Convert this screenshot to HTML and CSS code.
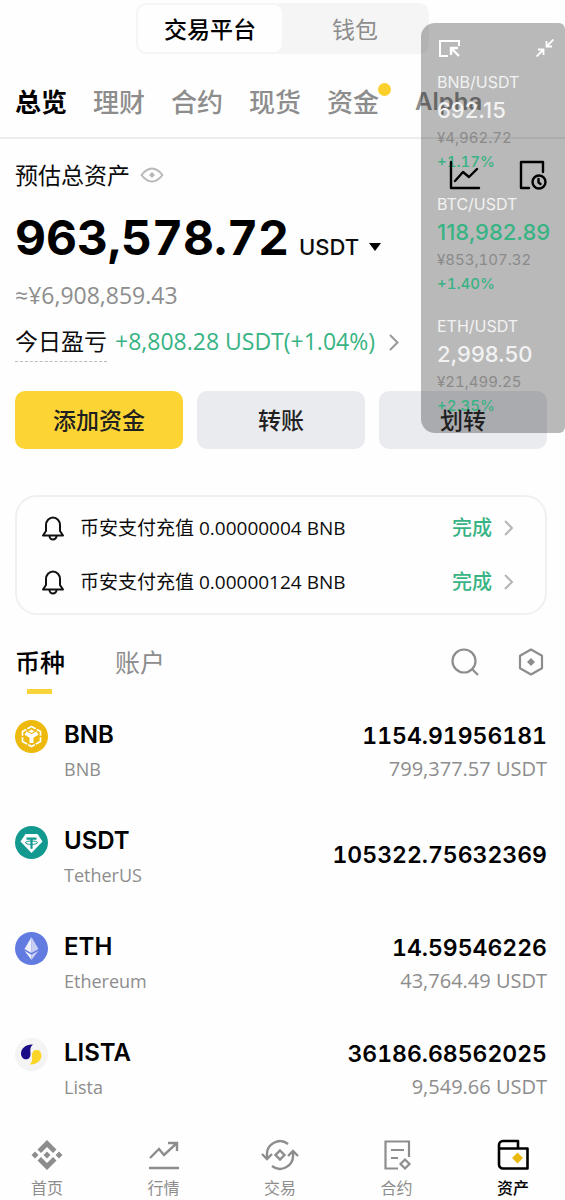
FILE: index.html
```html
<!DOCTYPE html>
<html lang="zh-CN">
<head>
<meta charset="utf-8">
<meta name="viewport" content="width=device-width, initial-scale=1">
<title>资产</title>
<link rel="stylesheet" href="styles.css">
</head>
<body>
<header>
  <div class="switch">
    <button class="switch-item active">交易平台</button>
    <button class="switch-item">钱包</button>
  </div>
  <nav class="tabs">
    <a href="#" class="tab active">总览</a>
    <a href="#" class="tab">理财</a>
    <a href="#" class="tab">合约</a>
    <a href="#" class="tab">现货</a>
    <a href="#" class="tab dotted">资金</a>
    <a href="#" class="tab">Alpha</a>
  </nav>
</header>

<main>
  <section class="summary">
    <div class="summary-head">
      <span>预估总资产</span>
      <svg class="eye" width="24" height="16" viewBox="0 0 24 16" fill="none" stroke="#b8b8b8" stroke-width="2"><path d="M1.500 8C5 3.500 8 1.500 12 1.500S19 3.500 22.500 8C19 12.500 16 14.500 12 14.500S5 12.500 1.500 8Z"/><path d="M12 5l3 3-3 3-3-3z" fill="#b8b8b8" stroke="none"/></svg>
      <div class="quick">
        <button class="icon-btn" aria-label="走势"><svg width="32" height="30" viewBox="0 0 32 30" fill="none" stroke="#000" stroke-width="2.400" stroke-linecap="round" stroke-linejoin="round"><path d="M2 2v26h28"/><path d="M6 21l8-9 6 5 8-8"/></svg></button>
        <button class="icon-btn" aria-label="历史记录"><svg width="28" height="30" viewBox="0 0 28 30" fill="none" stroke="#000" stroke-width="2.400" stroke-linecap="round" stroke-linejoin="round"><path d="M24 12V2H2v26h8"/><circle cx="20" cy="22" r="6.500"/><path d="M19.500 19v3.500l2 1.500"/></svg></button>
      </div>
    </div>
    <div class="balance">
      <strong class="amount">963,578.72</strong>
      <button class="unit">USDT <svg width="12" height="8" viewBox="0 0 12 8"><path d="M0 0h12L6 8z"/></svg></button>
    </div>
    <div class="fiat">≈¥6,908,859.43</div>
    <a href="#" class="pnl">
      <span class="pnl-label">今日盈亏</span>
      <span class="pnl-value">+8,808.28 USDT(+1.04%)</span>
      <svg width="10" height="17" viewBox="0 0 10 17" fill="none" stroke="#999" stroke-width="2"><path d="M1 1l7.500 7.500L1 16"/></svg>
    </a>
    <div class="actions">
      <button class="action primary">添加资金</button>
      <button class="action">转账</button>
      <button class="action"><span class="raised">划转</span></button>
    </div>
  </section>

  <section class="notices">
    <a href="#" class="notice">
      <svg width="24" height="26" viewBox="0 0 24 26" fill="none" stroke="#111" stroke-width="2" stroke-linejoin="round"><path d="M5 10a7 7.500 0 0 1 14 0v6l3 4.500H2L5 16z"/><path d="M8.500 21a3.500 3.500 0 0 0 7 0"/></svg>
      <span class="notice-text">币安支付充值 0.00000004 BNB</span>
      <span class="done">完成</span>
      <svg width="10" height="16" viewBox="0 0 10 16" fill="none" stroke="#b5b5b5" stroke-width="2"><path d="M1 1l7 7-7 7"/></svg>
    </a>
    <a href="#" class="notice">
      <svg width="24" height="26" viewBox="0 0 24 26" fill="none" stroke="#111" stroke-width="2" stroke-linejoin="round"><path d="M5 10a7 7.500 0 0 1 14 0v6l3 4.500H2L5 16z"/><path d="M8.500 21a3.500 3.500 0 0 0 7 0"/></svg>
      <span class="notice-text">币安支付充值 0.00000124 BNB</span>
      <span class="done">完成</span>
      <svg width="10" height="16" viewBox="0 0 10 16" fill="none" stroke="#b5b5b5" stroke-width="2"><path d="M1 1l7 7-7 7"/></svg>
    </a>
  </section>

  <div class="list-head">
    <button class="list-tab active">币种</button>
    <button class="list-tab">账户</button>
    <div class="list-tools">
      <button class="icon-btn" aria-label="搜索"><svg width="28" height="28" viewBox="0 0 28 28" fill="none" stroke="#8d8d8d" stroke-width="2.200"><circle cx="13" cy="13" r="11.500"/><path d="M21 21l6 6"/></svg></button>
      <button class="icon-btn" aria-label="设置"><svg width="26" height="28" viewBox="0 0 26 28" fill="none" stroke="#8d8d8d" stroke-width="2.200" stroke-linejoin="round"><path d="M13 1.500l11 6.200v12.600l-11 6.200-11-6.200V7.700z"/><path d="M13 10l4 4-4 4-4-4z" fill="#8d8d8d" stroke="none"/></svg></button>
    </div>
  </div>

  <ul class="coins">
    <li class="coin">
      <svg class="coin-icon" width="33" height="33" viewBox="0 0 33 33"><circle cx="16.500" cy="16.500" r="16.500" fill="#edb90c"/><path d="M16.500 6.500l9 5v10l-9 5-9-5v-10z" fill="none" stroke="#fff" stroke-width="1.700"/><path d="M16.500 16.500l-6-3.500M16.500 16.500l6-3.500M16.500 16v7" stroke="#fff" stroke-width="4" fill="none"/><path d="M16.500 9.500l3 1.700-3 1.700-3-1.700z" fill="#fff"/><path d="M11 8l2 3M22 8l-2 3M6 16.500h3.500M24 16.500h3M12 25.500l1.500-2.500M21 25.500l-1.500-2.500" stroke="#edb90c" stroke-width="1.300"/></svg>
      <div class="coin-name"><b>BNB</b><small>BNB</small></div>
      <div class="coin-value"><b>1154.91956181</b><small>799,377.57 USDT</small></div>
    </li>
    <li class="coin">
      <svg class="coin-icon" width="33" height="33" viewBox="0 0 33 33"><circle cx="16.500" cy="16.500" r="16.500" fill="#129990"/><path d="M10.500 8h12l5 7.500-11 11.500-11-11.500z" fill="#fff"/><path d="M11.500 11.500h10v2.200h-3.900v9h-2.200v-9h-3.900z" fill="#129990"/><ellipse cx="16.500" cy="16.700" rx="6" ry="1.700" fill="none" stroke="#129990" stroke-width="1"/></svg>
      <div class="coin-name"><b>USDT</b><small>TetherUS</small></div>
      <div class="coin-value"><b>105322.75632369</b></div>
    </li>
    <li class="coin">
      <svg class="coin-icon" width="33" height="33" viewBox="0 0 33 33"><circle cx="16.500" cy="16.500" r="16.500" fill="#627be0"/><path d="M16.500 5L9.500 17l7 4z" fill="#eef0fb"/><path d="M16.500 5l7 12-7 4z" fill="#c8cff3"/><path d="M9.500 18.700l7 4V28z" fill="#eef0fb"/><path d="M23.500 18.700l-7 4V28z" fill="#c8cff3"/></svg>
      <div class="coin-name"><b>ETH</b><small>Ethereum</small></div>
      <div class="coin-value"><b>14.59546226</b><small>43,764.49 USDT</small></div>
    </li>
    <li class="coin">
      <svg class="coin-icon" width="33" height="33" viewBox="0 0 33 33"><circle cx="16.500" cy="16.500" r="16.500" fill="#f4f4f4"/><path d="M18 6.500C11 6 6 10.500 6 15.500c0 3.500 2.500 5.800 5 5.800 3 0 4.500-2.200 4.500-5.300C15.500 12 14.500 9.500 18 6.500z" fill="#1a0c86"/><path d="M14.500 26.500C21.500 27 26.500 22.500 26.500 17.500c0-3.500-2.300-5.500-5-5.500-3 0-4.500 2-4.500 5 0 4 1 6.500-2.500 9.500z" fill="#fbd527"/></svg>
      <div class="coin-name"><b>LISTA</b><small>Lista</small></div>
      <div class="coin-value"><b>36186.68562025</b><small>9,549.66 USDT</small></div>
    </li>
  </ul>
</main>

<nav class="bottom-nav">
  <a href="#" class="nav-item"><svg width="32" height="32" viewBox="0 0 32 32" fill="#8d8d8d"><path d="M16 1l9.500 9.500-3.500 3.500-6-6-6 6-3.500-3.500z"/><path d="M16 31l9.500-9.500L22 18l-6 6-6-6-3.500 3.500z"/><path d="M16 12.500l3.500 3.500-3.500 3.500-3.500-3.500zM4 12.500L7.500 16 4 19.500.5 16zM28 12.500l3.500 3.500-3.500 3.500-3.500-3.500z"/></svg>首页</a>
  <a href="#" class="nav-item"><svg width="32" height="32" viewBox="0 0 32 32" fill="none" stroke="#8d8d8d" stroke-width="2.400"><path d="M2 19l9-9 5 6L29 4M20 4h9v8M1 29h30"/></svg>行情</a>
  <a href="#" class="nav-item"><svg width="38" height="32" viewBox="0 0 38 32" fill="none" stroke="#8d8d8d" stroke-width="2.400"><path d="M27 5A13 13 0 0 0 6 16v3M1 15l5 5 5-5M11 27a13 13 0 0 0 21-11v-3M27 17l5-5 5 5"/><path d="M19 11.500l4.500 4.500-4.500 4.500-4.500-4.500z"/></svg>交易</a>
  <a href="#" class="nav-item"><svg width="32" height="32" viewBox="0 0 32 32" fill="none" stroke="#8d8d8d" stroke-width="2.200"><path d="M17 29.500H4.500v-27H28V18M10 11h13M10 19h7"/><path d="M24 20.500l4.500 4.500-4.500 4.500-4.500-4.500z"/></svg>合约</a>
  <a href="#" class="nav-item active"><svg width="32" height="32" viewBox="0 0 32 32" fill="none" stroke="#000" stroke-width="2.600" stroke-linejoin="round"><path d="M2 9.500h28.500v20H6a4 4 0 0 1-4-4V6a4 4 0 0 1 4-4h15v7.500"/><path d="M20.500 13.500l5.500 5.500-5.500 5.500L15 19z" fill="#e9b90f" stroke="none"/></svg>资产</a>
</nav>

<aside class="ticker">
  <div class="ticker-head">
    <svg width="21" height="17" viewBox="0 0 21 17" fill="none" stroke="#fff" stroke-width="2"><path d="M20 6V1H1v15h8"/><path d="M12 15V8h7M12 8l8 8" stroke-width="2.400"/></svg>
    <svg width="18" height="18" viewBox="0 0 18 18" fill="none" stroke="#fff" stroke-width="1.800"><path d="M17.500.5l-7 7M10.500 2v5.500H16M.5 17.500l7-7M2 10.500h5.500V16"/></svg>
  </div>
  <div class="pair"><span class="pair-name">BNB/USDT</span><span class="pair-price">692.15</span><span class="pair-fiat">¥4,962.72</span><span class="pair-change">+1.17%</span></div>
  <div class="pair"><span class="pair-name">BTC/USDT</span><span class="pair-price up">118,982.89</span><span class="pair-fiat">¥853,107.32</span><span class="pair-change">+1.40%</span></div>
  <div class="pair"><span class="pair-name">ETH/USDT</span><span class="pair-price">2,998.50</span><span class="pair-fiat">¥21,499.25</span><span class="pair-change">+2.35%</span></div>
</aside>
</body>
</html>
```
FILE: styles.css
```css
:root {
  --text: "Open Sans", "Noto Sans CJK SC", sans-serif;
  --figure: Inter, "Noto Sans CJK SC", sans-serif;
  --gray: #8d8d8d;
  --green: #38b384;
}

* { box-sizing: border-box; }

body {
  margin: 0;
  min-height: 100vh;
  position: relative;
  display: flex;
  flex-direction: column;
  background: #fefefe;
  color: #0c0c0c;
  font: 400 23px/30px var(--text);
}

a { color: inherit; text-decoration: none; }
button { border: 0; padding: 0; background: none; color: inherit; font: inherit; cursor: pointer; }
svg { display: block; flex: none; }
.icon-btn { display: block; }

.switch {
  width: 52%;
  margin: 3px auto 0;
  display: grid;
  grid-template-columns: 1fr 1fr;
  border: 2px solid #f5f5f5;
  border-radius: 10px;
  background: #f5f5f5;
}
.switch-item { height: 47px; border-radius: 8px; color: var(--gray); }
.switch-item.active { background: #fefefe; color: #000; font-weight: 500; }

.tabs {
  display: flex;
  gap: 26px;
  padding: 31px 15px 18px;
  border-bottom: 2px solid #ededed;
  font-size: 26px;
  line-height: 34px;
  font-weight: 500;
  color: var(--gray);
}
.tab { position: relative; white-space: nowrap; }
.tab.active { color: #000; font-weight: 700; }
.tab:last-child { margin-left: 10px; font: 600 24px/34px var(--figure); }
.tab.dotted::after {
  content: "";
  position: absolute;
  top: -2px;
  right: -12px;
  width: 13px;
  height: 13px;
  border-radius: 50%;
  background: #fbd02d;
}

.summary { padding: 19px 18px 0 15px; }
.summary-head { display: flex; align-items: center; height: 34px; gap: 10px; }
.quick { display: flex; gap: 38px; margin-left: auto; position: relative; z-index: 2; }

.balance { display: flex; align-items: baseline; gap: 10px; margin-top: 16px; line-height: 60px; }
.amount { font-family: var(--figure); font-size: 48px; font-weight: 700; font-variant-numeric: tabular-nums; color: #000; }
.unit { display: flex; align-items: center; gap: 10px; font-family: var(--figure); font-size: 22px; font-weight: 500; }
.fiat { margin-top: 3px; color: var(--gray); }
.pnl { display: flex; align-items: flex-start; margin-top: 16px; }
.pnl-label { padding-bottom: 5px; border-bottom: 1px dashed #bbb; }
.pnl-value { margin: 0 14px 0 8px; color: var(--green); white-space: nowrap; }
.pnl svg { margin-top: 8px; }

.actions { display: grid; grid-template-columns: repeat(3, 1fr); gap: 14px; margin-top: 29px; }
.action { height: 58px; border-radius: 10px; background: #eaebef; font-weight: 500; color: #202020; }
.action.primary { background: #fcd535; }
.raised { position: relative; z-index: 2; }

.notices { margin: 46px 18px 0 15px; padding: 4px 31px 4px 24px; border: 2px solid #f0f0f0; border-radius: 22px; }
.notice { display: flex; align-items: center; height: 54px; font-size: 19px; }
.notice-text { flex: 1; margin-left: 15px; }
.done { margin-right: 12px; font-size: 20px; font-weight: 500; color: var(--green); }

.list-head { display: flex; align-items: center; margin: 27px 21px 0 15px; gap: 50px; height: 40px; font-size: 25px; }
.list-tab { position: relative; line-height: 40px; color: var(--gray); }
.list-tab.active { color: #000; font-weight: 500; }
.list-tab.active::after {
  content: "";
  position: absolute;
  left: 50%;
  bottom: -12px;
  width: 25px;
  height: 5px;
  margin-left: -13px;
  background: #f8d33a;
}
.list-tools { display: flex; gap: 39px; margin-left: auto; }

.coins { list-style: none; margin: 34px 18px 0 15px; padding: 0; display: grid; gap: 36px; }
.coin { display: flex; min-height: 70px; }
.coin-icon { margin-top: 4px; }
.coin-name, .coin-value { display: flex; flex-direction: column; }
.coin-name { margin-left: 16px; }
.coin-value { margin-left: auto; padding-bottom: 4px; text-align: right; justify-content: center; }
.coin b { font: 600 24px/38px var(--figure); color: #000; }
.coin small { font-size: 18px; line-height: 30px; color: var(--gray); }
.coin-value b { font-size: 23px; line-height: 40px; font-variant-numeric: tabular-nums; }
.coin-value small { font-size: 20px; line-height: 26px; }

.bottom-nav { display: flex; justify-content: space-between; margin-top: auto; padding: 24px 20px 1px 15px; }
.nav-item { width: 64px; display: flex; flex-direction: column; align-items: center; gap: 6px; font-size: 16px; line-height: 22px; color: var(--gray); }
.nav-item.active { color: #000; font-weight: 500; }

.ticker {
  position: absolute;
  top: 23px;
  right: 0;
  z-index: 1;
  width: 144px;
  padding: 16px 11px 16px 16px;
  border-radius: 14px 6px 6px 14px;
  background: rgba(0, 0, 0, .27);
  font-family: var(--figure);
  color: #f2f2f2;
}
.ticker-head { display: flex; justify-content: space-between; align-items: center; height: 18px; margin: 0 0 12px 2px; }
.pair { display: flex; flex-direction: column; font-size: 15px; }
.pair + .pair { margin-top: 18px; }
.pair-name { font-size: 16px; line-height: 26px; }
.pair-price { font-size: 22px; font-weight: 500; line-height: 30px; }
.pair-fiat { line-height: 26px; color: #8a8a8a; font-variant-numeric: tabular-nums; }
.pair-change { line-height: 22px; font-weight: 500; font-variant-numeric: tabular-nums; }
.pair-price.up, .pair-change { color: var(--green); }
```
